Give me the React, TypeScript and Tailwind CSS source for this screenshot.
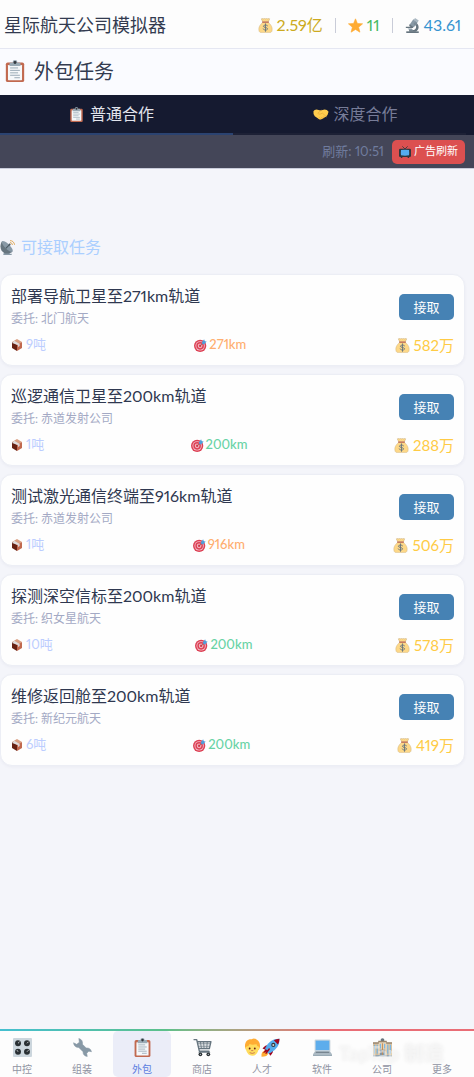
import React from 'react';
import clsx from 'clsx';

interface IconProps {
  className?: string;
}

const ClipboardIcon: React.FC<IconProps> = ({ className }) => (
  <svg viewBox="0 0 36 36" className={className} aria-hidden="true">
    <rect x="3" y="4" width="30" height="32" rx="3" fill="#c1694f" />
    <rect x="6.500" y="8" width="23" height="25" rx="1" fill="#f5f8fa" />
    <path d="M10 13h13M10 17h16M10 21h13M10 25h16M17 29h9" stroke="#99aab5" strokeWidth="1.6" />
    <path d="M14 4a4 4 0 0 1 8 0h3q2 0 2 2v4H9V6q0-2 2-2z" fill="#99aab5" />
    <circle cx="18" cy="4" r="2.4" fill="#31373d" />
  </svg>
);

const MoneyBagIcon: React.FC<IconProps> = ({ className }) => (
  <svg viewBox="0 0 36 36" className={className} aria-hidden="true">
    <path d="M12 10C5 15 1 22 2 29c.5 5 3 6 7 6h18c4 0 6.500-1 7-6 1-7-3-14-10-19z" fill="#fdd888" stroke="#c9ad75" strokeWidth="1" />
    <path d="M11 9 8 2q3-2 5 0 2-2 5 0 2-2 5 0 3-2 5 0l-3 7z" fill="#fdd888" stroke="#b99b68" strokeWidth="1" />
    <path d="M10 8.500h16v3H10z" fill="#bf6952" />
    <path d="M23 18.500c-1-2-9-3-10 1-.8 4 10 2.500 10 6.500 0 4-9 4-10.500.5M18 14v18" fill="none" stroke="#67757f" strokeWidth="2.2" strokeLinecap="round" />
  </svg>
);

const StarIcon: React.FC<IconProps> = ({ className }) => (
  <svg viewBox="0 0 36 36" className={className} aria-hidden="true">
    <path d="m18 2 4.600 11.200L35 14l-9.500 8L28.600 34 18 27.400 7.400 34l3.100-12L1 14l12.400-.8z" fill="#ffac33" stroke="#ffac33" strokeWidth="1.5" strokeLinejoin="round" />
  </svg>
);

const MicroscopeIcon: React.FC<IconProps> = ({ className }) => (
  <svg viewBox="0 0 36 36" className={className} aria-hidden="true">
    <path d="M3 32h30v4H3z" fill="#66757f" />
    <path d="M19 29c8 0 10-9 5-14l4-3c8 8 5 18-3 21H10v-4z" fill="#66757f" />
    <path d="M2 21h17v3H2z" fill="#66757f" />
    <path d="M6 25h10l4 5h-8z" fill="#8899a6" />
    <path d="m20 3 10 7-9 13-10-7z" fill="#8899a6" />
    <path d="m24 0 9 6-3 5-9-6z" fill="#aab8c2" />
    <path d="m11 15 9 6-3 3-7-5z" fill="#66757f" />
    <circle cx="25" cy="14" r="4" fill="#7b8b97" />
  </svg>
);

const HandshakeIcon: React.FC<IconProps> = ({ className }) => (
  <svg viewBox="0 0 36 36" className={className} aria-hidden="true">
    <path d="M1 12q2-4 7-4l9 2 9-2q6 0 9 5-1 7-6 11L19 30q-3 1-6-1L4 23q-4-5-3-11z" fill="#ffcc4d" />
    <path d="m18 10-7 6q1 4 6 2l4-2 9 8M12 29l3-4M17 29l3-4M22 28l2-4" fill="none" stroke="#e5a93a" strokeWidth="1.6" strokeLinecap="round" />
  </svg>
);

const TvIcon: React.FC<IconProps> = ({ className }) => (
  <svg viewBox="0 0 36 36" className={className} aria-hidden="true">
    <path d="m10 1 8 8 8-8" fill="none" stroke="#31373d" strokeWidth="2.5" />
    <rect x="0" y="8" width="36" height="25" rx="4" fill="#31373d" />
    <path d="M6 12q12-2 24 0 1 8 0 16-12 2-24 0-1-8 0-16z" fill="#55acee" />
    <path d="M5 33h6l-2 3H6zM25 33h6l-1 3h-3z" fill="#31373d" />
  </svg>
);

const SatelliteDishIcon: React.FC<IconProps> = ({ className }) => (
  <svg viewBox="0 0 36 36" className={className} aria-hidden="true">
    <path d="m17 23 7 10h4v3H8v-3z" fill="#8899a6" />
    <path d="M5 3C-2 14 1 26 10 31c7 3 15 1 20-3z" fill="#66757f" />
    <ellipse cx="17.500" cy="15.500" rx="6" ry="17.500" transform="rotate(-45 17.500 15.500)" fill="#8899a6" />
    <path d="m14 20 9-9" stroke="#4a5963" strokeWidth="2.5" />
    <circle cx="23" cy="11" r="2.500" fill="#4a5963" />
    <path d="M24 6q5 0 6 6M24 1.500q9 0 11 10" fill="none" stroke="#e0aa5c" strokeWidth="2.400" />
  </svg>
);

const PackageIcon: React.FC<IconProps> = ({ className }) => (
  <svg viewBox="0 0 36 36" className={className} aria-hidden="true">
    <path d="M3 9 18 0l15 9-15 10z" fill="#d99e82" />
    <path d="M3 9v18l15 9V18z" fill="#662113" />
    <path d="M33 9v18l-15 9V18z" fill="#c1694f" />
    <path d="m3 12 7-7 16 10v6l-5 3v-6z" fill="#e1e8ed" opacity=".85" />
  </svg>
);

const TargetIcon: React.FC<IconProps> = ({ className }) => (
  <svg viewBox="0 0 36 36" className={className} aria-hidden="true">
    <circle cx="17" cy="19" r="17" fill="#dd4054" />
    <circle cx="17" cy="19" r="13" fill="#f2bcc6" />
    <circle cx="17" cy="19" r="10.500" fill="#dd4054" />
    <circle cx="17" cy="19" r="6.500" fill="#f2bcc6" />
    <circle cx="17" cy="19" r="3.500" fill="#dd4054" />
    <path d="M17 19 29 7" stroke="#8b5146" strokeWidth="2" />
    <path d="m22 9 6-8 2 5 5 1-7 8-5-1z" fill="#4f9fdb" />
  </svg>
);

const KnobsIcon: React.FC<IconProps> = ({ className }) => (
  <svg viewBox="0 0 36 36" className={className} aria-hidden="true">
    <rect width="36" height="36" rx="2" fill="#ccd6dd" />
    <g fill="#292f33">
      <circle cx="9.500" cy="10" r="5.600" />
      <circle cx="26.500" cy="10" r="5.600" />
      <circle cx="9.500" cy="26" r="5.600" />
      <circle cx="26.500" cy="26" r="5.600" />
    </g>
    <path d="m9.500 10 3-3M26.500 10l3-3M9.500 26l-2-3M26.500 26l3-3" stroke="#f5f8fa" strokeWidth="1.4" />
  </svg>
);

const WrenchIcon: React.FC<IconProps> = ({ className }) => (
  <svg viewBox="0 0 36 36" className={className} aria-hidden="true">
    <path
      d="M11 1q8 2 7 11l7 7q8-1 10 7l-5-1-4 4 1 6q-8-1-8-9l-8-8Q2 18 1 9l6 3 5-4z"
      fill="#8899a6"
      stroke="#8899a6"
      strokeLinejoin="round"
    />
  </svg>
);

const CartIcon: React.FC<IconProps> = ({ className }) => (
  <svg viewBox="0 0 36 36" className={className} aria-hidden="true">
    <path d="M1 3h6l5 22h19M8 7h26l-3 13H11" fill="none" stroke="#66757f" strokeWidth="2.600" strokeLinejoin="round" />
    <path d="M9 11h24M10 15.500h22M14 7l2 13M20 7l1 13M27 7l-1 13" stroke="#66757f" strokeWidth="1.600" />
    <path d="M12 25h19l2 3H10z" fill="#66757f" />
    <circle cx="14" cy="31" r="3.500" fill="#292f33" />
    <circle cx="29" cy="31" r="3.500" fill="#292f33" />
    <circle cx="14" cy="31" r="1.200" fill="#ccd6dd" />
    <circle cx="29" cy="31" r="1.200" fill="#ccd6dd" />
  </svg>
);

const AstronautIcon: React.FC<IconProps> = ({ className }) => (
  <svg viewBox="0 0 70 36" className={className} aria-hidden="true">
    <path d="M2 17C1 7 7 1 15 2q5-3 10 1 7 4 6 14l-2 6H4z" fill="#ffac33" />
    <path d="M5 16q4 0 6-5 6 3 13 0 1 4 4 5 3 2 0 7-3 11-12 11T4 23q-2-5 1-7z" fill="#ffdc5d" />
    <circle cx="11" cy="20" r="1.800" fill="#662113" />
    <circle cx="21" cy="20" r="1.800" fill="#662113" />
    <path d="M14 24h4M11 28q5 3 10 0" fill="none" stroke="#c1694f" strokeWidth="1.600" />
    <path d="M36 20q7-9 17-6l-8 10zM51 34q8-7 5-18l-10 9z" fill="#a0041e" />
    <path d="M34 36q-1-10 7-12l6 5q-1 7-13 7z" fill="#ffac33" />
    <path d="M69 1Q51 0 42 18l-2 5 7 7 5-2Q70 18 69 1z" fill="#55acee" />
    <path d="M69 1q-6 0-11 3l8 8q3-5 3-11zM42 21l-5 8 10-4z" fill="#a0041e" />
    <path d="m49 21-6 8" stroke="#a0041e" strokeWidth="3" strokeLinecap="round" />
    <circle cx="57" cy="13" r="4" fill="#31373d" />
    <circle cx="57" cy="13" r="2" fill="#ccd6dd" />
  </svg>
);

const LaptopIcon: React.FC<IconProps> = ({ className }) => (
  <svg viewBox="0 0 36 36" className={className} aria-hidden="true">
    <rect x="3" y="3" width="30" height="23" rx="2" fill="#ccd6dd" />
    <path d="M5 5h26v18H5z" fill="#5dadec" />
    <path d="M4 25h28l4 6H0z" fill="#aab8c2" />
    <path d="M6 26h24l1 2H5z" fill="#66757f" />
    <path d="M0 31h36v2q0 1-1 1H1q-1 0-1-1z" fill="#99aab5" />
  </svg>
);

const CompanyIcon: React.FC<IconProps> = ({ className }) => (
  <svg viewBox="0 0 36 36" className={className} aria-hidden="true">
    <circle cx="18" cy="4" r="3.500" fill="#67757f" />
    <path d="M0 9h11v25H0zM25 9h11v25H25z" fill="#dcc3a0" />
    <path d="M10 6h16v28H10z" fill="#e8d3b5" />
    <path d="M0 8h11v3H0zM25 8h11v3H25zM10 5h16v3H10z" fill="#99866f" />
    <path d="M3 13v17M8 13v17M28 13v17M33 13v17M14 11v9M22 11v9" stroke="#7bb8e4" strokeWidth="2.200" />
    <path d="M13 22h10v12H13z" fill="#8899a6" />
    <path d="M18 10v24" stroke="#c4935f" strokeWidth="2" />
    <path d="M0 32h36v3H0z" fill="#99aab5" />
  </svg>
);

interface Task {
  title: string;
  client: string;
  weight: string;
  orbit: string;
  high?: boolean;
  reward: string;
}

const tasks: Task[] = [
  { title: '部署导航卫星至271km轨道', client: '北门航天', weight: '9吨', orbit: '271km', high: true, reward: '582万' },
  { title: '巡逻通信卫星至200km轨道', client: '赤道发射公司', weight: '1吨', orbit: '200km', reward: '288万' },
  { title: '测试激光通信终端至916km轨道', client: '赤道发射公司', weight: '1吨', orbit: '916km', high: true, reward: '506万' },
  { title: '探测深空信标至200km轨道', client: '织女星航天', weight: '10吨', orbit: '200km', reward: '578万' },
  { title: '维修返回舱至200km轨道', client: '新纪元航天', weight: '6吨', orbit: '200km', reward: '419万' },
];

interface NavItem {
  label: string;
  icon?: React.FC<IconProps>;
  wide?: boolean;
}

const navItems: NavItem[] = [
  { label: '中控', icon: KnobsIcon },
  { label: '组装', icon: WrenchIcon },
  { label: '外包', icon: ClipboardIcon },
  { label: '商店', icon: CartIcon },
  { label: '人才', icon: AstronautIcon, wide: true },
  { label: '软件', icon: LaptopIcon },
  { label: '公司', icon: CompanyIcon },
  { label: '更多' },
];

const TaskCard: React.FC<{ task: Task }> = ({ task }) => (
  <li className="rounded-xl border border-[#eceef5] bg-[#fefefe] px-2.5 pt-[9px] pb-2 shadow-[0_1px_3px_rgba(80,90,140,0.06)]">
    <div className="flex items-center justify-between">
      <div>
        <h3 className="text-[16px] leading-6 text-[#2f3850]">{task.title}</h3>
        <p className="mt-px text-[12px] leading-5 text-[#a3a9c4]">委托: {task.client}</p>
      </div>
      <button type="button" className="h-[26px] w-[55px] rounded-[5px] bg-[#4682b4] text-[13px] leading-5 text-white">
        接取
      </button>
    </div>
    <div className="mt-1 flex h-6 items-center justify-between">
      <span className="flex items-center gap-[3px] text-[13px] text-[#bccdff]">
        <PackageIcon className="size-3" />
        {task.weight}
      </span>
      <span className={clsx('flex items-center gap-0.5 text-[13px] font-medium', task.high ? 'text-[#ffae70]' : 'text-[#68d3a5]')}>
        <TargetIcon className="size-[13px]" />
        {task.orbit}
      </span>
      <span className="flex items-center gap-1 text-[15px] leading-5 text-[#ffcb45]">
        <MoneyBagIcon className="size-[15px]" />
        {task.reward}
      </span>
    </div>
  </li>
);

export default function App() {
  return (
    <div className="flex min-h-screen flex-col bg-[#f4f5fa] font-['Lato','Noto_Sans_CJK_SC',sans-serif] proportional-nums">
      <header className="flex h-[49px] items-center justify-between border-b border-[#e5e7f2] bg-[#fdfdfd] pt-0.5 pr-[13px] pl-1">
        <h1 className="text-[18px] text-[#333b50]">星际航天公司模拟器</h1>
        <div className="flex items-center gap-3 text-[16px]">
          <span className="flex items-center gap-1 text-[#ccaa20]">
            <MoneyBagIcon className="size-[15px]" />
            2.59亿
          </span>
          <span className="h-[15px] w-px bg-[#c9ccd8]" />
          <span className="flex items-center gap-1 text-[#45b963]">
            <StarIcon className="size-[15px]" />
            11
          </span>
          <span className="h-[15px] w-px bg-[#c9ccd8]" />
          <span className="flex items-center gap-1 text-[#3694d0]">
            <MicroscopeIcon className="size-[15px]" />
            43.61
          </span>
        </div>
      </header>

      <div className="flex h-[46px] items-center gap-2 bg-[#fafbff] pb-0.5 pl-1">
        <ClipboardIcon className="size-[22px]" />
        <h2 className="text-[20px] text-[#333b50]">外包任务</h2>
      </div>

      <div className="grid h-10 grid-cols-2 bg-[#151a30] pr-2 text-[16px]" role="tablist">
        <button type="button" role="tab" aria-selected="true" className="flex items-center justify-center gap-1.5 border-b-2 border-[#2b4371] pr-2.5 text-[#e2e4ec]">
          <ClipboardIcon className="size-[15px]" />
          普通合作
        </button>
        <button type="button" role="tab" aria-selected="false" className="flex items-center justify-center gap-1 border-b-2 border-[#1d2136] pl-3 text-[#777c98]">
          <HandshakeIcon className="size-4" />
          深度合作
        </button>
      </div>

      <div className="flex h-[34px] items-center justify-end gap-2 border-b border-[#c9ccda] bg-[#444658] pr-[9px]">
        <span className="text-[13px] text-[#707c9e]">刷新: 10:51</span>
        <button type="button" className="flex h-6 items-center gap-[3px] rounded-[5px] bg-[#dc5050] px-[7px] text-[11px] text-white">
          <TvIcon className="size-3" />
          广告刷新
        </button>
      </div>

      <main className="flex-1 pt-[66px] pr-[9px]">
        <h2 className="flex h-6 items-center gap-1.5 text-[16px] text-[#abcfff]">
          <SatelliteDishIcon className="size-[15px]" />
          可接取任务
        </h2>
        <ul className="mt-[15px] flex flex-col gap-2">
          {tasks.map((task) => (
            <TaskCard key={task.title} task={task} />
          ))}
        </ul>
      </main>

      <footer className="relative overflow-hidden bg-[#fdfdfd]">
        <div className="h-0.5 bg-linear-to-r from-[#45bfd0] via-[#5cc08a] via-35% to-[#e96d76] to-70%" />
        <nav className="mr-[3px] -ml-[7px] grid grid-cols-8 gap-0.5">
          {navItems.map(({ label, icon: Icon, wide }) => {
            const active = label === '外包';
            return (
              <button
                key={label}
                type="button"
                className={clsx(
                  'flex h-[46px] flex-col items-center gap-1 rounded-[5px] pt-[7px] text-[10px] leading-4',
                  active ? 'bg-[#ebedf8] text-[#5c7de0]' : 'text-[#9194a3]',
                )}
              >
                <span className="flex h-[19px] items-center">
                  {Icon && <Icon className={wide ? 'h-[19px] w-9' : 'size-[19px]'} />}
                </span>
                {label}
              </button>
            );
          })}
        </nav>
        <span className="pointer-events-none absolute top-3 right-[30px] text-[20px] leading-6 font-black text-[#f8f8f8]/50 [text-shadow:0_0_4px_rgba(0,0,0,0.06)]">
          TapTap 制造
        </span>
      </footer>
    </div>
  );
}
